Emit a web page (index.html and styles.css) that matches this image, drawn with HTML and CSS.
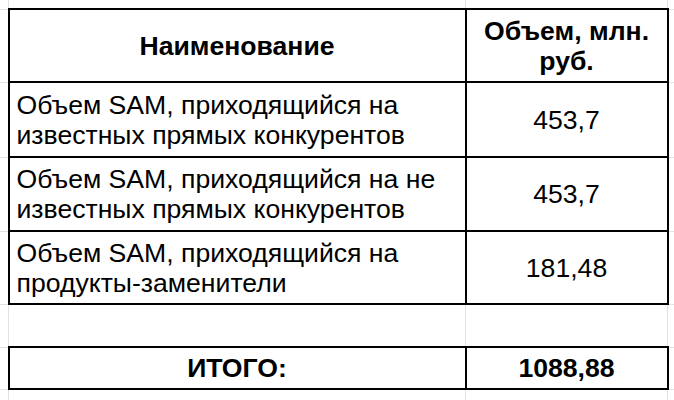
FILE: index.html
```html
<!DOCTYPE html>
<html lang="ru">
<head>
<meta charset="utf-8">
<link rel="stylesheet" href="styles.css">
</head>
<body>
<table class="sheet">
  <colgroup>
    <col class="c-gutter">
    <col class="c-name">
    <col class="c-value">
    <col class="c-rest">
  </colgroup>
  <tr class="r-top"><td></td><td></td><td></td><td></td></tr>
  <tr class="r-head">
    <td></td>
    <td class="cell head">Наименование</td>
    <td class="cell head">Объем, млн.<br>руб.</td>
    <td></td>
  </tr>
  <tr class="r-1">
    <td></td>
    <td class="cell name">Объем SAM, приходящийся на<br>известных прямых конкурентов</td>
    <td class="cell value">453,7</td>
    <td></td>
  </tr>
  <tr class="r-2">
    <td></td>
    <td class="cell name">Объем SAM, приходящийся на не<br>известных прямых конкурентов</td>
    <td class="cell value">453,7</td>
    <td></td>
  </tr>
  <tr class="r-3">
    <td></td>
    <td class="cell name">Объем SAM, приходящийся на<br>продукты-заменители</td>
    <td class="cell value">181,48</td>
    <td></td>
  </tr>
  <tr class="r-empty"><td></td><td></td><td></td><td></td></tr>
  <tr class="r-total">
    <td></td>
    <td class="cell total">ИТОГО:</td>
    <td class="cell total">1088,88</td>
    <td></td>
  </tr>
  <tr class="r-bottom"><td></td><td></td><td></td><td></td></tr>
</table>
</body>
</html>
```
FILE: styles.css
```css
html, body {
  margin: 0;
  padding: 0;
  background: #ffffff;
  overflow: hidden;
}

.sheet {
  border-collapse: collapse;
  table-layout: fixed;
  width: 700px;
  margin: -1px 0 0 -1px;
  font-family: "Liberation Sans", Arial, sans-serif;
  font-size: 26.6px;
  color: #000000;
}

.sheet td {
  border: 1px solid #e2e2e2;
  padding: 0;
}

.c-gutter { width: 9px; }
.c-name { width: 457px; }
.c-value { width: 202px; }
.c-rest { width: 32px; }

.r-top td { height: 8px; }
.r-head td { height: 71px; }
.r-1 td { height: 73px; }
.r-2 td { height: 72px; }
.r-3 td { height: 71px; }
.r-empty td { height: 41px; }
.r-total td { height: 40px; }
.r-bottom td { height: 20px; }

.sheet td.cell {
  border: 2px solid #000000;
  vertical-align: middle;
  line-height: 30px;
}

.sheet td.head {
  font-weight: bold;
  text-align: center;
}

.sheet td.name {
  text-align: left;
  padding-left: 7px;
}

.sheet td.value {
  text-align: center;
}

.sheet td.total {
  font-weight: bold;
  text-align: center;
}
```
